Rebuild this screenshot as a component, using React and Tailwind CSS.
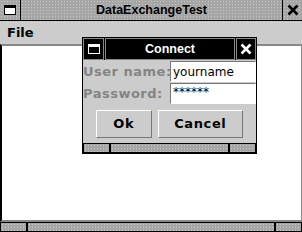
import React from 'react';

const stipple =
  'bg-[#a6a6a6] bg-[radial-gradient(circle,#c6c6c6_0.6px,transparent_0.8px)] bg-[length:3px_3px]';

function WinIcon({ dark }) {
  return (
    <svg width="12" height="10" viewBox="0 0 12 10">
      <rect x="0.5" y="0.5" width="11" height="9" fill={dark ? '#000' : '#fff'} stroke={dark ? '#fff' : '#000'} />
      <rect x="0.5" y="0.5" width="11" height="2.5" fill={dark ? '#fff' : '#000'} />
    </svg>
  );
}

function CloseX({ color }) {
  return (
    <svg width="12" height="12" viewBox="0 0 12 12">
      <path d="M1.5 1.5 L10.5 10.5 M10.5 1.5 L1.5 10.5" stroke={color} strokeWidth="2.6" />
    </svg>
  );
}

function BottomBar({ left, right }) {
  return (
    <div className="flex h-[10px] gap-[2px] bg-black px-[1px] py-[1px]">
      <div className={`${stipple} ${left}`} />
      <div className={`${stipple} flex-1`} />
      <div className={`${stipple} ${right}`} />
    </div>
  );
}

const arial = { fontFamily: '"Liberation Sans", Arial, sans-serif' };

export default function App() {
  return (
    <div
      className="relative flex h-[232px] w-[302px] flex-col overflow-hidden bg-black"
      style={{ fontFamily: '"DejaVu Sans", sans-serif' }}
    >
      {/* main title bar */}
      <div className="flex h-[21px] gap-[1px] border-b border-black">
        <div className={`${stipple} flex w-[20px] items-center justify-center`}>
          <WinIcon />
        </div>
        <div
          className={`${stipple} flex flex-1 items-center justify-center text-[12.5px] font-bold text-black`}
          style={arial}
        >
          DataExchangeTest
        </div>
        <div className={`${stipple} flex w-[19px] items-center justify-center`}>
          <CloseX color="#000" />
        </div>
      </div>

      {/* menu bar */}
      <div className="flex h-[23px] items-center bg-[#cccccc] px-[7px] text-[13px] font-bold text-black">
        File
      </div>

      {/* content */}
      <div className="flex-1 border-t-2 border-l-2 border-r border-b-2 border-t-[#888] border-l-black border-r-[#888] border-b-[#888] bg-white" />
      <BottomBar left="w-[25px]" right="w-[25px]" />

      {/* dialog */}
      <div className="absolute left-[82px] top-[37px] flex w-[175px] flex-col border border-black bg-[#cccccc]">
        <div className="flex h-[22px] gap-[1px] bg-black">
          <div className="flex w-[21px] items-center justify-center border border-[#888]">
            <WinIcon dark />
          </div>
          <div
            className="flex flex-1 items-center justify-center border border-[#888] text-[12.5px] font-bold text-white"
            style={arial}
          >
            Connect
          </div>
          <div className="flex w-[20px] items-center justify-center border border-[#888]">
            <CloseX color="#fff" />
          </div>
        </div>

        <div className="flex flex-col gap-[1px] pt-[1px]">
          <div className="flex items-center">
            <span className="w-[87px] text-[13px] font-bold tracking-[0.5px] whitespace-nowrap text-[#858585]">
              User name:
            </span>
            <div className="flex h-[21px] flex-1 items-center border border-[#777] border-r-white border-b-white bg-white px-[2px] text-[12px] text-black">
              yourname
            </div>
          </div>
          <div className="flex items-center">
            <span className="w-[87px] text-[13px] font-bold tracking-[0.5px] whitespace-nowrap text-[#858585]">
              Password:
            </span>
            <div className="flex h-[21px] flex-1 items-start border border-[#777] border-r-white border-b-white bg-white px-[2px] pt-[2px] text-[12px] leading-[12px] text-black">
              ******
            </div>
          </div>
        </div>

        <div className="flex gap-[6px] px-[13px] pt-[6px] pb-[5px]">
          <button className="h-[28px] w-[56px] border border-white border-r-[#777] border-b-[#777] text-[13px] font-bold tracking-[0.6px]">
            Ok
          </button>
          <button className="h-[28px] w-[86px] border border-white border-r-[#777] border-b-[#777] text-[13px] font-bold tracking-[0.6px]">
            Cancel
          </button>
        </div>
        <BottomBar left="w-[25px]" right="w-[25px]" />
      </div>
    </div>
  );
}
